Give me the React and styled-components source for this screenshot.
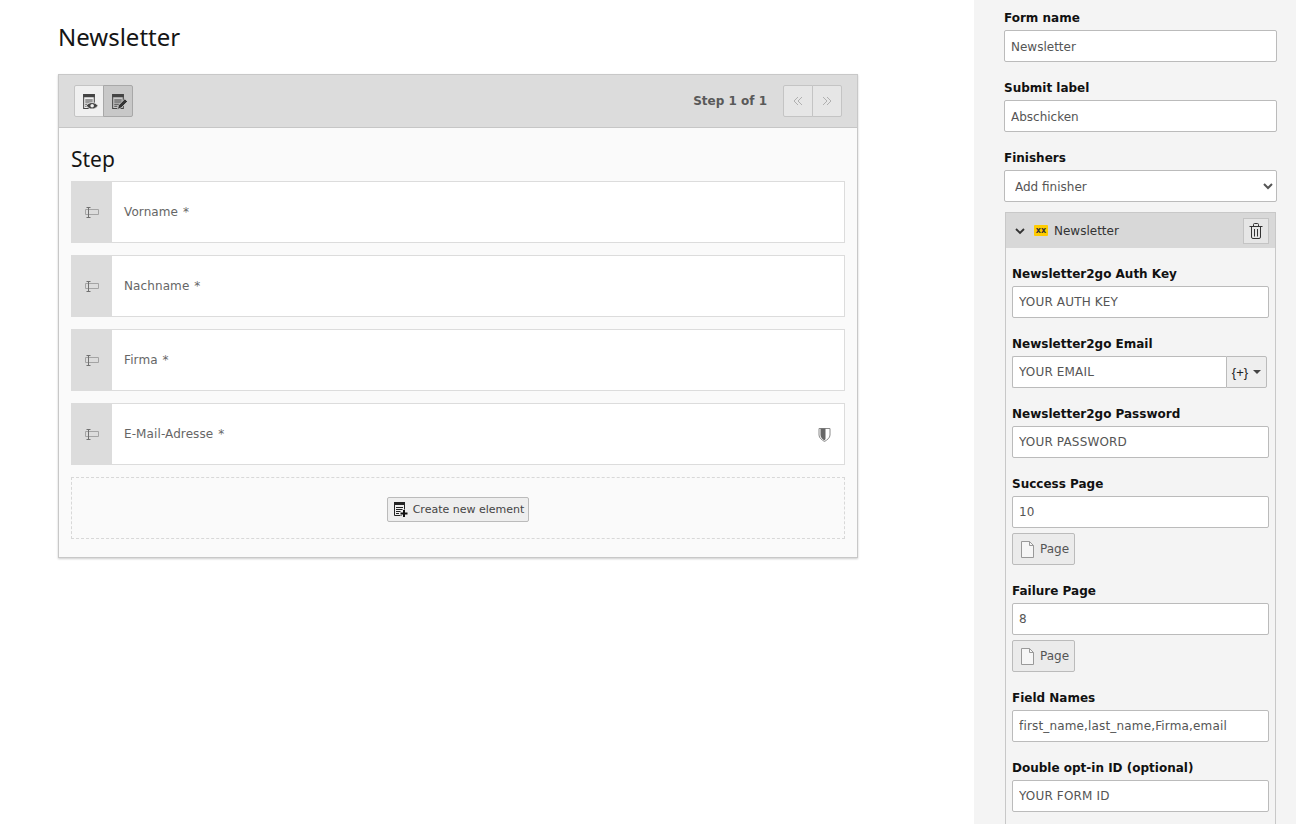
import React from 'react';
import styled, { createGlobalStyle } from 'styled-components';

const GlobalStyle = createGlobalStyle`
  html, body {
    margin: 0;
    padding: 0;
    height: 100%;
    overflow: hidden;
    background: #fff;
  }
  body {
    font-family: "DejaVu Sans", Verdana, sans-serif;
    font-size: 12px;
    color: #333;
  }
`;

const Page = styled.div`
  display: flex;
  height: 824px;
  overflow: hidden;
`;
const Main = styled.main`
  width: 974px;
  box-sizing: border-box;
  padding: 19px 0 0 58px;
`;
const Title = styled.h1`
  margin: 0 0 19px;
  font: 400 24px/36px "Noto Sans", sans-serif;
  color: #151515;
`;
const Stage = styled.section`
  width: 800px;
  height: 484px;
  box-sizing: border-box;
  border: 1px solid #c8c8c8;
  background: #fafafa;
  box-shadow: 0 1px 2px rgba(0, 0, 0, 0.2);
`;
const StageHeader = styled.header`
  display: flex;
  align-items: center;
  justify-content: space-between;
  height: 53px;
  box-sizing: border-box;
  padding: 0 15px;
  background: #dcdcdc;
  border-bottom: 1px solid #c6c6c6;
`;
const BtnGroup = styled.div`
  display: flex;
`;
const ToolBtn = styled.button`
  display: flex;
  align-items: center;
  justify-content: center;
  width: 30px;
  height: 32px;
  padding: 0;
  margin-left: ${p => (p.$joined ? '-1px' : 0)};
  background: ${p => (p.$active ? '#c8c8c8' : p.$off ? '#e6e6e6' : '#f0f0f0')};
  border: 1px solid ${p => (p.$active ? '#a8a8a8' : '#c4c4c4')};
  border-radius: ${p => p.$r || '0'};
`;
const Pager = styled.div`
  display: flex;
  align-items: center;
  gap: 16px;
`;
const StepCount = styled.span`
  font-weight: 700;
  font-size: 12px;
  color: #595959;
`;
const StageBody = styled.div`
  padding: 16px 12px 0;
`;
const StepTitle = styled.h2`
  margin: 0 0 7px;
  font: 400 21px/30px "Noto Sans", sans-serif;
  color: #151515;
`;
const Rows = styled.div`
  display: flex;
  flex-direction: column;
  gap: 12px;
`;
const Row = styled.div`
  display: flex;
  height: 62px;
  box-sizing: border-box;
  background: #fff;
  border: 1px solid #dcdcdc;
  border-left: 0;
`;
const Handle = styled.div`
  display: flex;
  align-items: center;
  justify-content: center;
  width: 41px;
  background: #dcdcdc;
`;
const RowLabel = styled.div`
  flex: 1;
  align-self: center;
  padding-left: 12px;
  color: #666;
  letter-spacing: 0.1px;
  word-spacing: 1px;
`;
const RowIcon = styled.div`
  display: flex;
  align-items: center;
  padding-right: 13px;
`;
const DropZone = styled.div`
  display: flex;
  align-items: center;
  justify-content: center;
  height: 62px;
  box-sizing: border-box;
  padding-top: 2px;
  border: 1px dashed #d8d8d8;
`;
const CreateBtn = styled.button`
  display: flex;
  align-items: center;
  gap: 5px;
  height: 25px;
  padding: 0 4px;
  font: 11px "DejaVu Sans", Verdana, sans-serif;
  color: #444;
  background: #eee;
  border: 1px solid #bbb;
  border-radius: 2px;
`;

const Side = styled.aside`
  flex: 1;
  box-sizing: border-box;
  padding: 9px 19px 0 30px;
  background: #f4f4f4;
`;
const Field = styled.div`
  margin-bottom: 17px;
`;
const Label = styled.label`
  display: block;
  height: 16px;
  margin-bottom: 5px;
  font-weight: 700;
  font-size: 12px;
  line-height: 18px;
  color: #111;
`;
const Input = styled.input`
  display: block;
  width: 100%;
  height: 32px;
  box-sizing: border-box;
  padding: ${p => (p.$low ? '2px' : '0')} 6px 0;
  font: 12px "DejaVu Sans", Verdana, sans-serif;
  letter-spacing: ${p => (p.$spaced ? '0.16px' : 'normal')};
  color: #555;
  background: #fff;
  border: 1px solid #bbb;
  border-radius: 2px;
  outline: none;
`;
const Select = styled.select`
  display: block;
  width: 100%;
  height: 32px;
  box-sizing: border-box;
  padding: 2px 6px 0;
  font: 12px "DejaVu Sans", Verdana, sans-serif;
  color: #555;
  background: #fff;
  border: 1px solid #bbb;
  border-radius: 2px;
`;
const Panel = styled.div`
  margin: -7px 1px 0;
  background: #f4f4f4;
  border: 1px solid #c8c8c8;
  border-bottom: 0;
`;
const PanelHead = styled.div`
  display: flex;
  align-items: center;
  height: 35px;
  padding: 0 6px 0 9px;
  background: #d8d8d8;
  color: #333;
`;
const Badge = styled.span`
  width: 14px;
  height: 11px;
  margin: 0 6px 0 9px;
  font-size: 8px;
  font-weight: 700;
  line-height: 11px;
  text-align: center;
  color: #333;
  background: #fc0;
  border-radius: 1px;
`;
const PanelTitle = styled.span`
  flex: 1;
`;
const TrashBtn = styled.button`
  display: flex;
  align-items: center;
  justify-content: center;
  width: 26px;
  height: 26px;
  padding: 0;
  background: #e6e6e6;
  border: 1px solid #c4c4c4;
`;
const PanelBody = styled.div`
  padding: 17px 6px 40px;
`;
const InputGroup = styled.div`
  display: flex;
  width: 255px;
`;
const GroupInput = styled(Input)`
  flex: 1;
  min-width: 0;
  border-radius: 2px 0 0 2px;
  border-right: 0;
`;
const VarBtn = styled.button`
  display: flex;
  align-items: center;
  justify-content: center;
  gap: 5px;
  width: 41px;
  height: 32px;
  padding: 0;
  font: 13px "Liberation Sans", Arial, sans-serif;
  color: #222;
  background: #eee;
  border: 1px solid #bbb;
  border-radius: 0 2px 2px 0;
`;
const Caret = styled.span`
  width: 0;
  height: 0;
  border: 4px solid transparent;
  border-top-color: #444;
  border-bottom: 0;
`;
const PageBtn = styled.button`
  display: flex;
  align-items: center;
  gap: 6px;
  height: 32px;
  margin-top: 5px;
  padding: 0 5px 0 8px;
  font: 12px "DejaVu Sans", Verdana, sans-serif;
  color: #555;
  background: #ebebeb;
  border: 1px solid #bbb;
  border-radius: 2px;
`;

const ListLines = ({ color = '#444' }) => (
  <>
    <path d="M2.500 1.500h10v13h-10z" fill="none" stroke={color} />
    <path d="M2 1h11v3H2z" fill={color} />
    <path d="M4 6.500h7M4 8.500h7M4 10.500h5M4 12.500h3" stroke={color} />
  </>
);

const ViewIcon = () => (
  <svg width="17" height="17" viewBox="0 0 16 16">
    <ListLines />
    <path d="M5 12c2.500-4 8-4 11 0-3 4-8.500 4-11 0z" fill="#444" stroke="#f0f0f0" strokeWidth="0.800" />
    <circle cx="10.500" cy="12" r="1.700" fill="#f0f0f0" />
  </svg>
);

const EditIcon = () => (
  <svg width="17" height="17" viewBox="0 0 16 16">
    <ListLines />
    <path d="M7 15.500l1-4 6-6 2.500 2.500-6 6z" fill="#333" stroke="#c8c8c8" strokeWidth="0.800" />
  </svg>
);

const PlusListIcon = () => (
  <svg width="16" height="16" viewBox="0 0 16 16">
    <ListLines color="#222" />
    <path d="M8 12.500h8M12 8.500v7.500" stroke="#eee" strokeWidth="4" />
    <path d="M8.500 12.500h7M12 9v7" stroke="#111" strokeWidth="2" />
  </svg>
);

const TextFieldIcon = () => (
  <svg width="14" height="11" viewBox="0 0 14 11">
    <path d="M0.500 2.500h13v5h-13z" fill="none" stroke="#a4a4a4" />
    <path d="M1.500 0.500h4M1.500 10.500h4M3.500 0.500v10" stroke="#707070" fill="none" />
  </svg>
);

const ShieldIcon = () => (
  <svg width="13" height="15" viewBox="0 0 13 15">
    <path d="M1 1.500h11v6.500c0 3-3 5-5.500 6.500C4 13 1 11 1 8z" fill="#fff" stroke="#8a8a8a" />
    <path d="M2.500 1.500h5v10.500l-1 1.500c-2-1-4-3-4-5.500z" fill="#666" />
  </svg>
);

const ChevronsIcon = ({ right }) => (
  <svg width="10" height="10" viewBox="0 0 10 10">
    <path
      d={right ? 'M1 1l4 4-4 4M5 1l4 4-4 4' : 'M5 1L1 5l4 4M9 1L5 5l4 4'}
      fill="none"
      stroke="#b0b0b0"
    />
  </svg>
);

const ChevronDown = () => (
  <svg width="10" height="8" viewBox="0 0 10 8">
    <path d="M1 2l4 4 4-4" fill="none" stroke="#333" strokeWidth="1.800" />
  </svg>
);

const TrashIcon = () => (
  <svg width="14" height="16" viewBox="0 0 14 16">
    <path
      d="M0.500 3.500h13M4.500 3.500V1.500a1 1 0 0 1 1-1h3a1 1 0 0 1 1 1v2M2.500 3.500v10.500a1.500 1.500 0 0 0 1.500 1.500h6a1.500 1.500 0 0 0 1.500-1.500V3.500M5.500 6v7.500M8.500 6v7.500"
      fill="none"
      stroke="#333"
    />
  </svg>
);

const FileIcon = () => (
  <svg width="13" height="17" viewBox="0 0 13 17">
    <path d="M0.500 0.500h8l4 4v12h-12z" fill="#f6f6f6" stroke="#999" />
    <path d="M8.500 0.500v4h4" fill="none" stroke="#999" />
  </svg>
);

const elements = ['Vorname *', 'Nachname *', 'Firma *'];

const TextField = ({ label, value, low, spaced }) => (
  <Field>
    <Label>{label}</Label>
    <Input defaultValue={value} $low={low} $spaced={spaced} />
  </Field>
);

const PageField = ({ label, value }) => (
  <Field>
    <Label>{label}</Label>
    <Input defaultValue={value} />
    <PageBtn>
      <FileIcon />
      Page
    </PageBtn>
  </Field>
);

export default function App() {
  return (
    <Page>
      <GlobalStyle />
      <Main>
        <Title>Newsletter</Title>
        <Stage>
          <StageHeader>
            <BtnGroup>
              <ToolBtn $r="2px 0 0 2px">
                <ViewIcon />
              </ToolBtn>
              <ToolBtn $active $joined $r="0 2px 2px 0">
                <EditIcon />
              </ToolBtn>
            </BtnGroup>
            <Pager>
              <StepCount>Step 1 of 1</StepCount>
              <BtnGroup>
                <ToolBtn $off $r="2px 0 0 2px">
                  <ChevronsIcon />
                </ToolBtn>
                <ToolBtn $off $joined $r="0 2px 2px 0">
                  <ChevronsIcon right />
                </ToolBtn>
              </BtnGroup>
            </Pager>
          </StageHeader>
          <StageBody>
            <StepTitle>Step</StepTitle>
            <Rows>
              {elements.map(name => (
                <Row key={name}>
                  <Handle>
                    <TextFieldIcon />
                  </Handle>
                  <RowLabel>{name}</RowLabel>
                </Row>
              ))}
              <Row>
                <Handle>
                  <TextFieldIcon />
                </Handle>
                <RowLabel>E-Mail-Adresse *</RowLabel>
                <RowIcon>
                  <ShieldIcon />
                </RowIcon>
              </Row>
              <DropZone>
                <CreateBtn>
                  <PlusListIcon />
                  Create new element
                </CreateBtn>
              </DropZone>
            </Rows>
          </StageBody>
        </Stage>
      </Main>
      <Side>
        <TextField label="Form name" value="Newsletter" low />
        <TextField label="Submit label" value="Abschicken" low />
        <Field>
          <Label>Finishers</Label>
          <Select defaultValue="">
            <option value="">Add finisher</option>
          </Select>
        </Field>
        <Panel>
          <PanelHead>
            <ChevronDown />
            <Badge>xx</Badge>
            <PanelTitle>Newsletter</PanelTitle>
            <TrashBtn>
              <TrashIcon />
            </TrashBtn>
          </PanelHead>
          <PanelBody>
            <TextField label="Newsletter2go Auth Key" value="YOUR AUTH KEY" spaced />
            <Field>
              <Label>Newsletter2go Email</Label>
              <InputGroup>
                <GroupInput defaultValue="YOUR EMAIL" $spaced />
                <VarBtn>
                  {'{+}'}
                  <Caret />
                </VarBtn>
              </InputGroup>
            </Field>
            <TextField label="Newsletter2go Password" value="YOUR PASSWORD" spaced />
            <PageField label="Success Page" value="10" />
            <PageField label="Failure Page" value="8" />
            <TextField label="Field Names" value="first_name,last_name,Firma,email" spaced />
            <TextField label="Double opt-in ID (optional)" value="YOUR FORM ID" spaced />
          </PanelBody>
        </Panel>
      </Side>
    </Page>
  );
}
